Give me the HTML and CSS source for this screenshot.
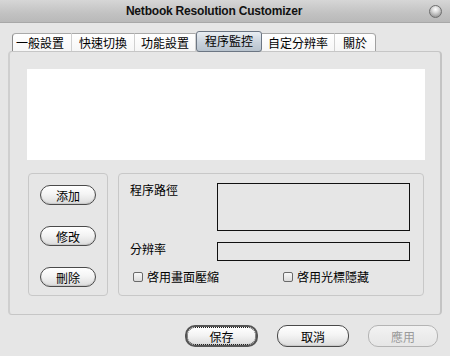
FILE: index.html
```html
<!DOCTYPE html>
<html>
<head>
<meta charset="utf-8">
<link rel="stylesheet" href="styles.css">
</head>
<body>
<div class="window">
  <div class="titlebar">
    <span class="title">Netbook Resolution Customizer</span>
    <span class="close"></span>
  </div>
  <div class="tabs">
    <div class="tab first">一般設置</div>
    <div class="tab">快速切換</div>
    <div class="tab">功能設置</div>
    <div class="tab active">程序監控</div>
    <div class="tab">自定分辨率</div>
    <div class="tab last">關於</div>
  </div>
  <div class="panel">
    <div class="list"></div>
    <div class="lower">
      <div class="group left">
        <button class="btn">添加</button>
        <button class="btn">修改</button>
        <button class="btn">刪除</button>
      </div>
      <div class="group right">
        <div class="row">
          <span class="label">程序路徑</span>
          <div class="field tall"></div>
        </div>
        <div class="row row2">
          <span class="label">分辨率</span>
          <div class="field"></div>
        </div>
        <div class="checks">
          <label class="check c1"><span class="box"></span>啓用畫面壓縮</label>
          <label class="check c2"><span class="box"></span>啓用光標隱藏</label>
        </div>
      </div>
    </div>
  </div>
  <div class="footer">
    <button class="btn big focus">保存</button>
    <button class="btn big">取消</button>
    <button class="btn big disabled">應用</button>
  </div>
</div>
</body>
</html>
```
FILE: styles.css
```css
* { box-sizing: border-box; }
html, body { margin: 0; padding: 0; }
body {
  width: 450px;
  height: 356px;
  background: #e6e6e6;
  font-family: "Noto Sans CJK TC", "Liberation Sans", sans-serif;
  font-size: 12px;
  color: #000;
  overflow: hidden;
}
.window { width: 450px; height: 356px; }
.titlebar {
  height: 23px;
  background: linear-gradient(#d6d6d6, #c2c2c2 60%, #b9b9b9);
  border-bottom: 1px solid #a8a8a8;
  display: flex;
  align-items: center;
  justify-content: center;
  position: relative;
}
.title {
  font-family: "Liberation Sans", sans-serif;
  font-weight: bold;
  font-size: 12px;
  color: #111;
  letter-spacing: -0.2px;
  margin-right: 22px;
}
.close {
  position: absolute;
  right: 8px;
  top: 5px;
  width: 13px;
  height: 13px;
  border-radius: 50%;
  border: 1px solid #6e6e6e;
  background: radial-gradient(circle at 50% 30%, #ffffff 0, #d8d8d8 35%, #9a9a9a 80%, #b8b8b8 100%);
}
.tabs {
  display: flex;
  margin: 10px 0 0 12px;
  height: 18px;
  align-items: flex-end;
  position: relative;
  z-index: 2;
}
.tab {
  height: 18px;
  line-height: 17px;
  padding: 0 6px;
  background: linear-gradient(#ffffff, #f6f6f6);
  border-top: 1px solid #a9a9a9;
  border-right: 1px solid #d0d0d0;
  white-space: nowrap;
}
.tab:nth-child(2) { padding: 0 7px; }
.tab.first { border-left: 1px solid #8a8a8a; border-top-left-radius: 4px; padding-left: 3px; padding-right: 7px; }
.tab.last { border-right: 1px solid #a0a0a0; border-top-right-radius: 4px; padding: 0 8px; }
.tab.active {
  height: 21px;
  margin-bottom: -1px;
  line-height: 18px;
  padding: 0 8px;
  background: linear-gradient(#e9eef3, #c9d2dc 55%, #b7c2cd);
  border: 1px solid #6c7683;
  border-radius: 3px;
  margin-top: -3px;
}
.panel {
  margin: 0 8px;
  height: 264px;
  border: 1px solid #c6c6c6;
  border-left: 2px solid #cfcfcf;
  border-right: 2px solid #c4c4c4;
  border-radius: 4px;
  background: #e6e6e6;
  padding: 17px 0 0 17px;
}
.list {
  width: 398px;
  height: 91px;
  background: #fff;
}
.lower {
  display: flex;
  margin-top: 13px;
  gap: 10px;
  margin-left: 1px;
}
.group {
  height: 123px;
  border: 1px solid #c8c8c8;
  border-radius: 4px;
  background: #e6e6e6;
}
.left {
  width: 80px;
  display: flex;
  flex-direction: column;
  align-items: center;
  padding-top: 11px;
  gap: 21px;
}
.btn {
  font-family: "Noto Sans CJK TC", sans-serif;
  font-size: 12px;
  color: #000;
  width: 56px;
  height: 20px;
  padding: 0;
  line-height: 17px;
  border: 1px solid #4a4a4a;
  border-radius: 10px;
  background: linear-gradient(#ffffff, #f4f4f4 45%, #dcdcdc);
  box-shadow: inset 0 -1px 1px #c8c8c8;
}
.right {
  width: 306px;
  padding: 8px 0 0 11px;
}
.row { display: flex; align-items: flex-start; }
.label { width: 87px; line-height: 14px; padding-top: 1px; }
.field {
  width: 193px;
  height: 19px;
  border: 1px solid #111;
  background: #e6e6e6;
}
.field.tall { height: 48px; margin-top: 1px; }
.row2 { margin-top: 11px; }
.row2 .label { padding-top: 0; }
.checks {
  display: flex;
  margin-top: 8px;
  margin-left: 3px;
}
.check {
  display: flex;
  align-items: center;
  line-height: 16px;
}
.c1 { width: 150px; }
.box {
  width: 10px;
  height: 10px;
  border: 1px solid #6a6a6a;
  border-radius: 2px;
  background: linear-gradient(#f8f8f8, #dcdcdc);
  margin-right: 4px;
}
.footer {
  display: flex;
  gap: 19px;
  margin: 10px 0 0 185px;
}
.btn.big {
  width: 73px;
  height: 22px;
  line-height: 19px;
}
.btn.big:nth-child(2) { width: 72px; }
.btn.focus {
  outline: 1px dotted #222;
  outline-offset: -3px;
  border-width: 2px;
  border-color: #555;
}
.btn.disabled {
  width: 70px;
  color: #9a9a9a;
  border-color: #b4b4b4;
  background: linear-gradient(#f2f2f2, #e6e6e6);
  box-shadow: none;
}
```
